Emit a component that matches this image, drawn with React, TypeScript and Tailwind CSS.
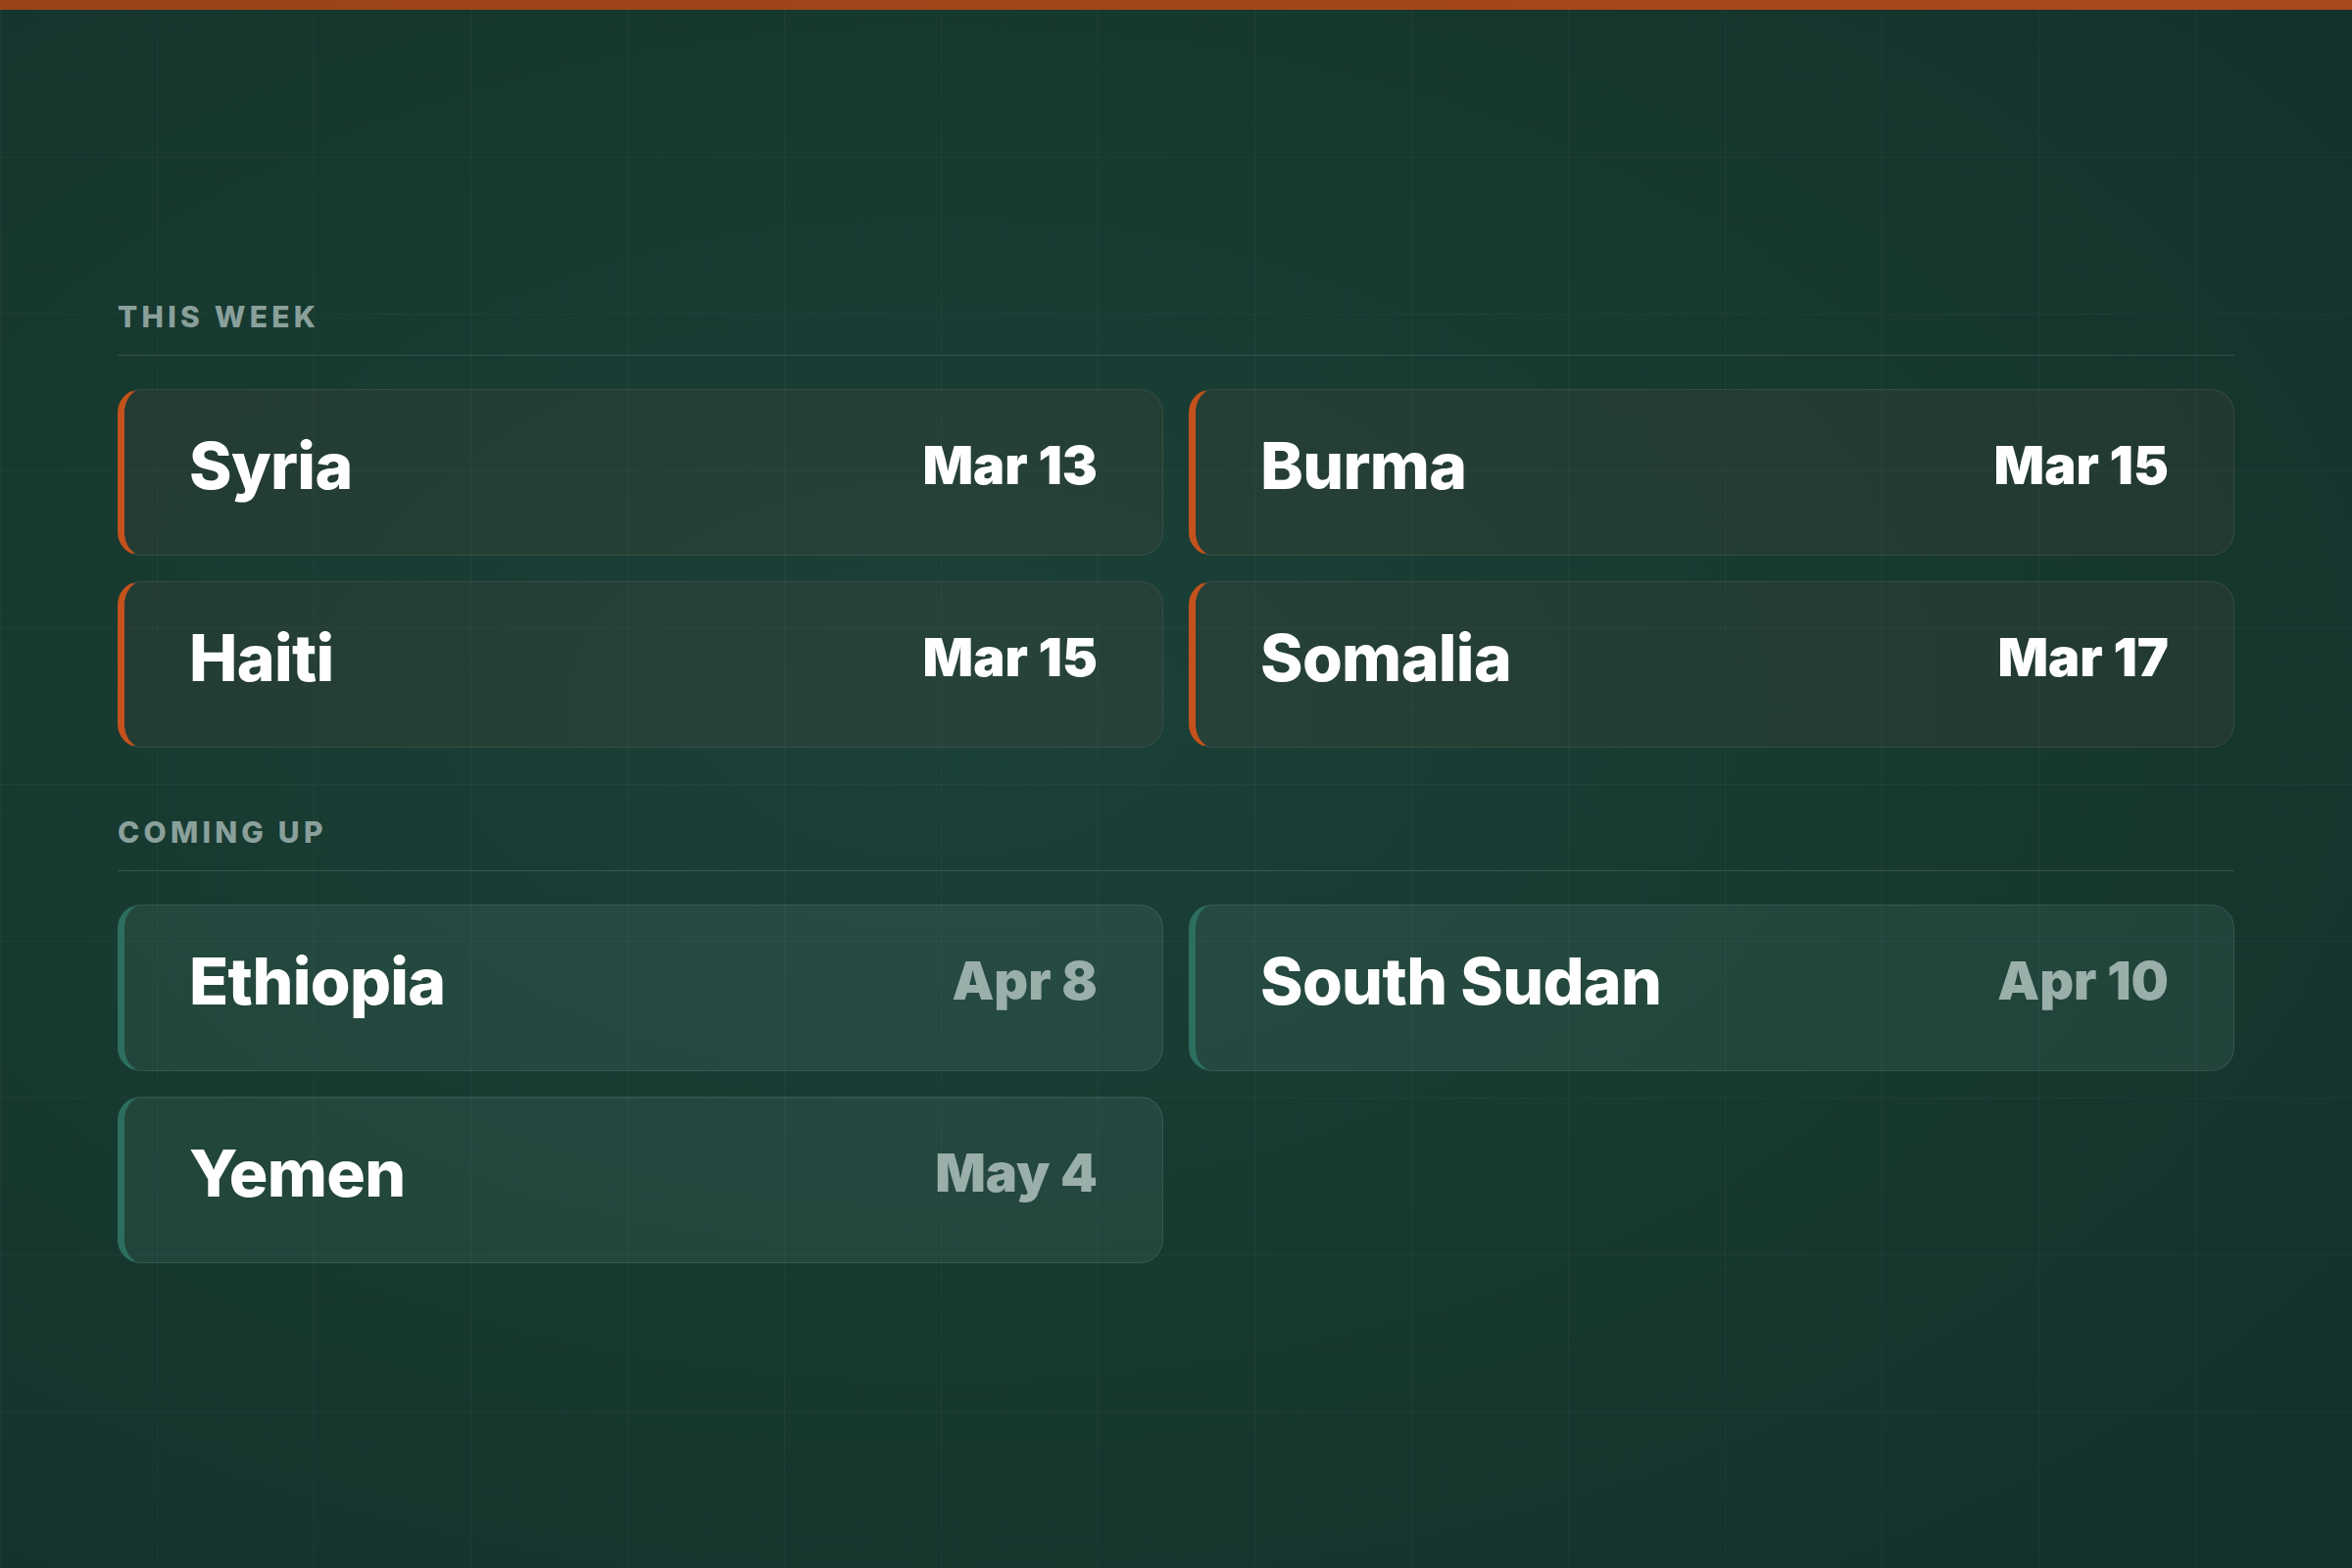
import React from "react";

type Item = { name: string; date: string };

const THIS_WEEK: Item[] = [
  { name: "Syria", date: "Mar 13" },
  { name: "Burma", date: "Mar 15" },
  { name: "Haiti", date: "Mar 15" },
  { name: "Somalia", date: "Mar 17" },
];

const COMING_UP: Item[] = [
  { name: "Ethiopia", date: "Apr 8" },
  { name: "South Sudan", date: "Apr 10" },
  { name: "Yemen", date: "May 4" },
];

function SectionLabel({ children }: { children: React.ReactNode }) {
  return (
    <div className="border-b border-white/[0.13] pb-[24px] text-[30px] font-extrabold uppercase leading-none tracking-[0.14em] text-[#8aa09b]">
      {children}
    </div>
  );
}

function Card({ item, soon }: { item: Item; soon?: boolean }) {
  return (
    <div
      className={
        soon
          ? "flex h-[170px] items-center justify-between rounded-[24px] border border-white/[0.09] border-l-[7px] border-l-[#2d6e60] bg-[rgba(200,255,240,0.07)] pb-[14px] pl-[66px] pr-[66px]"
          : "flex h-[170px] items-center justify-between rounded-[24px] border border-white/[0.08] border-l-[7px] border-l-[#c4521c] bg-[rgba(110,80,65,0.14)] pb-[14px] pl-[66px] pr-[66px]"
      }
    >
      <span className="text-[66px] font-extrabold leading-none tracking-[-0.01em] text-white">
        {item.name}
      </span>
      <span
        className={
          soon
            ? "text-[54px] font-black leading-none text-[#9aaeaa]"
            : "text-[54px] font-black leading-none text-white"
        }
      >
        {item.date}
      </span>
    </div>
  );
}

export default function App() {
  return (
    <div
      className="min-h-screen w-full bg-[#153530] bg-[linear-gradient(rgba(255,255,255,0.032)_1px,transparent_1px),linear-gradient(90deg,rgba(255,255,255,0.032)_1px,transparent_1px),radial-gradient(ellipse_at_40%_45%,#1b4139_0%,#17392f_50%,#13302b_100%)] bg-[size:160px_160px,160px_160px,100%_100%]"
      style={{ fontFamily: "Inter, 'Noto Sans', sans-serif" }}
    >
      <div className="h-[10px] w-full bg-gradient-to-r from-[#9a4318] to-[#a8491b]" />

      <div className="mx-[120px] pb-[300px] pt-[298px]">
        <SectionLabel>This week</SectionLabel>
        <div className="mt-[34px] grid grid-cols-2 gap-[26px]">
          {THIS_WEEK.map((it) => (
            <Card key={it.name} item={it} />
          ))}
        </div>

        <div className="mt-[71px]">
          <SectionLabel>Coming up</SectionLabel>
        </div>
        <div className="mt-[34px] grid grid-cols-2 gap-[26px]">
          {COMING_UP.map((it) => (
            <Card key={it.name} item={it} soon />
          ))}
        </div>
      </div>
    </div>
  );
}
